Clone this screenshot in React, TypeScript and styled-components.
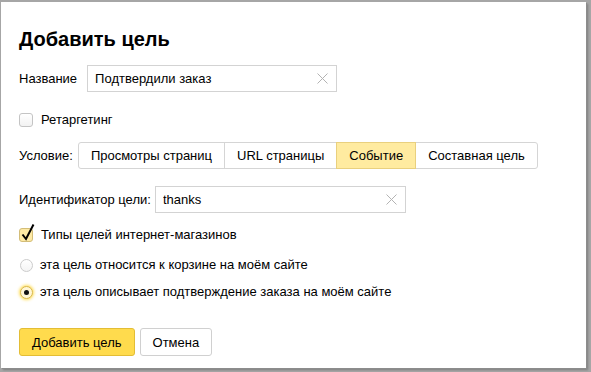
import React, { useState } from "react";
import styled, { createGlobalStyle } from "styled-components";

const GlobalStyle = createGlobalStyle`
   html, body {
      margin: 0;
      padding: 0;
      background: #a6a6a6;
      font-family: "Liberation Sans", Arial, sans-serif;
      color: #000;
   }
`;

const Page = styled.div`
   width: 591px;
   height: 372px;
   overflow: hidden;
   padding: 2px 0 0 1px;
   box-sizing: border-box;
`;

const Dialog = styled.div`
   width: 585px;
   height: 366px;
   background: #fff;
   box-shadow: 1px 1px 0 #8c8c8c, 2px 2px 2px rgba(0, 0, 0, 0.25);
   padding: 0 18px;
   box-sizing: border-box;
   display: flex;
   flex-direction: column;
   font-size: 13px;
`;

const Title = styled.h1`
   margin: 25px 0 0;
   font-size: 20px;
   line-height: 24px;
   font-weight: bold;
`;

const Row = styled.div<{ $mt: number; $gap?: number }>`
   display: flex;
   align-items: center;
   margin-top: ${(p) => p.$mt}px;
   gap: ${(p) => p.$gap ?? 0}px;
`;

const Label = styled.span`
   font-size: 13px;
   line-height: 16px;
`;

const InputBox = styled.div<{ $w: number }>`
   width: ${(p) => p.$w}px;
   height: 27px;
   border: 1px solid #d3d3d3;
   box-sizing: border-box;
   display: flex;
   align-items: center;
   padding: 0 8px 0 7px;
`;

const Input = styled.input`
   flex: 1;
   border: none;
   outline: none;
   padding: 0;
   font: 13px "Liberation Sans", Arial, sans-serif;
   color: #000;
   background: transparent;
`;

const Clear = styled.button`
   border: none;
   background: none;
   padding: 0;
   width: 11px;
   height: 11px;
   display: flex;
   cursor: pointer;
`;

const Tabs = styled.div`
   display: flex;
   margin-left: 5px;
`;

const Tab = styled.div<{ $active?: boolean }>`
   height: 27px;
   box-sizing: border-box;
   padding: 0 12px;
   display: flex;
   align-items: center;
   border: 1px solid ${(p) => (p.$active ? "#e9d07e" : "#d5d5d5")};
   background: ${(p) => (p.$active ? "#ffeba0" : "#fff")};
   margin-left: -1px;
   position: relative;
   z-index: ${(p) => (p.$active ? 1 : 0)};
   cursor: pointer;
   &:first-child {
      margin-left: 0;
      border-radius: 3px 0 0 3px;
   }
   &:last-child {
      border-radius: 0 3px 3px 0;
   }
`;

const Check = styled.span<{ $on?: boolean }>`
   width: 14px;
   height: 14px;
   box-sizing: border-box;
   border-radius: 3px;
   border: 1px solid ${(p) => (p.$on ? "#d3bd78" : "#c4c4c4")};
   background: ${(p) => (p.$on ? "#fde9a4" : "linear-gradient(#fff, #f2f2f2)")};
   position: relative;
   margin-right: 8px;
   flex-shrink: 0;
`;

const CheckMark = styled.svg`
   position: absolute;
   left: 1px;
   top: -5px;
   overflow: visible;
`;

const Radio = styled.span<{ $on?: boolean }>`
   width: 13px;
   height: 13px;
   box-sizing: border-box;
   border-radius: 50%;
   margin: 0 7px 0 1px;
   border: 1px solid ${(p) => (p.$on ? "#d8b850" : "#cccccc")};
   background: ${(p) => (p.$on ? "#fff6d6" : "linear-gradient(#fff, #f4f4f4)")};
   box-shadow: ${(p) => (p.$on ? "0 0 3px 1px rgba(255, 204, 0, 0.65)" : "none")};
   display: flex;
   align-items: center;
   justify-content: center;
   flex-shrink: 0;
   &::after {
      content: "";
      display: ${(p) => (p.$on ? "block" : "none")};
      width: 5px;
      height: 5px;
      border-radius: 50%;
      background: #111;
   }
`;

const Button = styled.button<{ $primary?: boolean }>`
   height: 28px;
   box-sizing: border-box;
   padding: 0 12px;
   border-radius: 3px;
   border: 1px solid ${(p) => (p.$primary ? "#e3bd35" : "#d0d0d0")};
   background: ${(p) => (p.$primary ? "#ffdb4d" : "#fff")};
   font: 13px "Liberation Sans", Arial, sans-serif;
   color: #000;
   cursor: pointer;
`;

const ClearIcon = () => (
   <svg width="11" height="11" viewBox="0 0 11 11">
      <path d="M0.5 0.5L10.5 10.5M10.5 0.5L0.5 10.5" stroke="#b3b3b3" strokeWidth="1" />
   </svg>
);

const conditions = ["Просмотры страниц", "URL страницы", "Событие", "Составная цель"];

export default function App() {
   const [name, setName] = useState("Подтвердили заказ");
   const [ident, setIdent] = useState("thanks");
   const [condition, setCondition] = useState("Событие");
   const [shopType, setShopType] = useState("order");

   return (
      <Page>
         <GlobalStyle />
         <Dialog>
            <Title>Добавить цель</Title>

            <Row $mt={14} $gap={10}>
               <Label>Название</Label>
               <InputBox $w={250}>
                  <Input value={name} onChange={(e) => setName(e.target.value)} />
                  <Clear onClick={() => setName("")}>
                     <ClearIcon />
                  </Clear>
               </InputBox>
            </Row>

            <Row $mt={20}>
               <Check />
               <Label>Ретаргетинг</Label>
            </Row>

            <Row $mt={14}>
               <Label>Условие:</Label>
               <Tabs>
                  {conditions.map((c) => (
                     <Tab key={c} $active={c == condition} onClick={() => setCondition(c)}>
                        {c}
                     </Tab>
                  ))}
               </Tabs>
            </Row>

            <Row $mt={17} $gap={4}>
               <Label>Идентификатор цели:</Label>
               <InputBox $w={251}>
                  <Input value={ident} onChange={(e) => setIdent(e.target.value)} />
                  <Clear onClick={() => setIdent("")}>
                     <ClearIcon />
                  </Clear>
               </InputBox>
            </Row>

            <Row $mt={14}>
               <Check $on>
                  <CheckMark width="14" height="17" viewBox="0 0 14 17">
                     <path d="M1.5 10.5L5 15L12.5 0.5" fill="none" stroke="#000" strokeWidth="2" />
                  </CheckMark>
               </Check>
               <Label>Типы целей интернет-магазинов</Label>
            </Row>

            <Row $mt={14} onClick={() => setShopType("cart")}>
               <Radio $on={shopType == "cart"} />
               <Label>эта цель относится к корзине на моём сайте</Label>
            </Row>

            <Row $mt={11} onClick={() => setShopType("order")}>
               <Radio $on={shopType == "order"} />
               <Label>эта цель описывает подтверждение заказа на моём сайте</Label>
            </Row>

            <Row $mt={28} $gap={5}>
               <Button $primary>Добавить цель</Button>
               <Button>Отмена</Button>
            </Row>
         </Dialog>
      </Page>
   );
}
